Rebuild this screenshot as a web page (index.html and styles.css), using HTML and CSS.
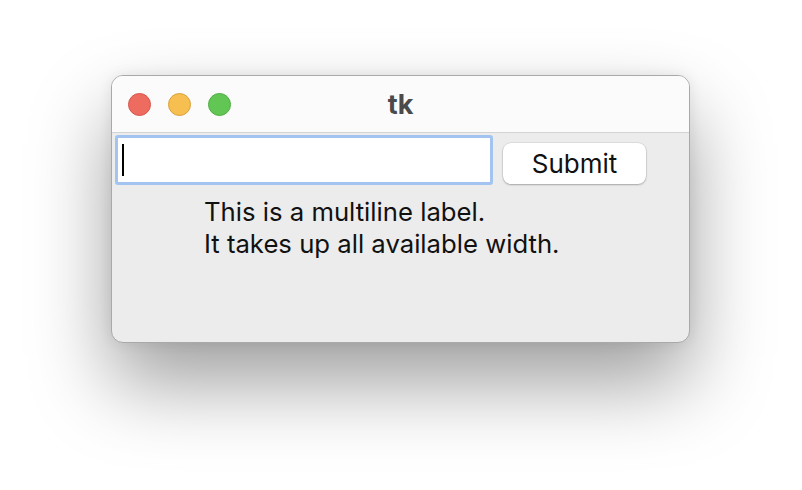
FILE: index.html
```html
<!DOCTYPE html>
<html>
<head>
<meta charset="utf-8">
<link rel="stylesheet" href="styles.css">
</head>
<body>
<div class="window">
  <div class="titlebar">
    <div class="lights">
      <span class="light red"></span>
      <span class="light yellow"></span>
      <span class="light green"></span>
    </div>
    <div class="title">tk</div>
  </div>
  <div class="content">
    <div class="row">
      <div class="entry"><span class="caret"></span></div>
      <div class="button">Submit</div>
    </div>
    <div class="label">This is a multiline label.<br>It takes up all available width.</div>
  </div>
</div>
</body>
</html>
```
FILE: styles.css
```css
html, body {
  margin: 0;
  padding: 0;
  background: #ffffff;
  width: 802px;
  height: 490px;
  overflow: hidden;
}
body {
  padding: 75px 0 0 111px;
  box-sizing: border-box;
  font-family: Inter, "Liberation Sans", sans-serif;
}
.window {
  width: 579px;
  height: 268px;
  box-sizing: border-box;
  border: 1px solid #a9a9a9;
  border-radius: 12px;
  background: #ececec;
  overflow: hidden;
  box-shadow: 0 40px 80px rgba(0,0,0,0.38), 0 0 14px rgba(0,0,0,0.08);
  display: flex;
  flex-direction: column;
}
.titlebar {
  height: 56px;
  flex: none;
  background: #fbfbfb;
  border-bottom: 1px solid #d3d3d3;
  display: flex;
  align-items: center;
  position: relative;
}
.lights {
  display: flex;
  gap: 17px;
  padding-left: 16px;
  padding-top: 1px;
}
.light {
  width: 23px;
  height: 23px;
  border-radius: 50%;
  box-sizing: border-box;
}
.red { background: #ee6b60; border: 1px solid #d5574d; }
.yellow { background: #f6bf4f; border: 1px solid #d9a13f; }
.green { background: #62c655; border: 1px solid #4fae43; }
.title {
  position: absolute;
  left: 0;
  right: 0;
  top: 0;
  bottom: 0;
  display: flex;
  align-items: center;
  justify-content: center;
  font-weight: 700;
  font-size: 27px;
  color: #4b4b4b;
  padding-top: 1px;
}
.content {
  padding: 2px 0 0 3px;
}
.row {
  display: flex;
  align-items: flex-start;
}
.entry {
  width: 368px;
  height: 44px;
  background: #ffffff;
  border: 3px solid #a3c3f0;
  border-radius: 3px;
  display: flex;
  align-items: center;
  padding-left: 4px;
  box-sizing: content-box;
}
.caret {
  width: 2px;
  height: 32px;
  background: #000;
}
.button {
  margin-left: 10px;
  margin-top: 8px;
  width: 143px;
  height: 41px;
  box-sizing: border-box;
  background: #ffffff;
  border-radius: 8px;
  box-shadow: 0 1px 2px rgba(0,0,0,0.25), 0 0 0 0.5px rgba(0,0,0,0.12);
  display: flex;
  align-items: center;
  justify-content: center;
  font-size: 26px;
  color: #111;
}
.label {
  margin-left: 89px;
  margin-top: 11px;
  font-size: 25.7px;
  line-height: 32px;
  color: #111;
}
```
